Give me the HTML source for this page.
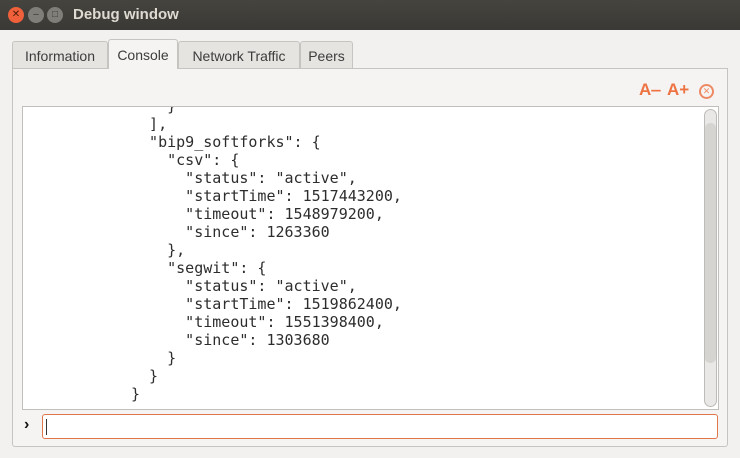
<!DOCTYPE html>
<html><head><style>
body{margin:0;width:740px;height:458px;background:#f2f1f0;font-family:"Liberation Sans",sans-serif;position:relative;overflow:hidden}
.title{position:absolute;left:0;top:0;width:740px;height:30px;background:linear-gradient(#45443f,#3a3935);}
.title span.t{position:absolute;left:73px;top:6px;color:#dfdbd2;font-weight:bold;font-size:15px}
.btn{position:absolute;top:7px;width:16px;height:16px;border-radius:50%;font-size:10px;text-align:center;line-height:16px}
.tab{position:absolute;top:41px;height:27px;border:1px solid #c6c4c0;border-bottom:none;border-radius:3px 3px 0 0;background:#e6e4e1;font-size:14px;color:#3c3c3c;line-height:28px;text-align:center;box-sizing:border-box}
.panel{position:absolute;left:12px;top:68px;width:716px;height:379px;border:1px solid #c6c4c0;border-radius:0 0 3px 3px;box-sizing:border-box;background:#f5f4f3}
.out{position:absolute;left:22px;top:106px;width:697px;height:304px;border:1px solid #c0bfbc;background:#fff;box-sizing:border-box;overflow:hidden}
pre{position:absolute;left:108px;top:-10px;margin:0;font-family:"DejaVu Sans Mono",monospace;font-size:15px;line-height:18px;color:#2d2d2d}
.input{position:absolute;left:42px;top:414px;width:676px;height:25px;border:1px solid #e0774a;border-radius:3px;background:#fff;box-sizing:border-box}
u{text-decoration:none;border-bottom:1px solid #333}
</style></head><body>
<div class="title">
<div class="btn" style="left:8px;background:#f0603a;color:#4a1a0a">✕</div>
<div class="btn" style="left:28px;background:#807e78;color:#3a3935">–</div>
<div class="btn" style="left:47px;background:#807e78;color:#3a3935">□</div>
<span class="t">Debug window</span></div>
<div class="panel"></div>
<div class="tab" style="left:12px;width:96px">Information</div>
<div class="tab" style="left:108px;width:70px;top:39px;height:30px;background:#f5f4f3;line-height:30px">Console</div>
<div class="tab" style="left:178px;width:122px">Network Traffic</div>
<div class="tab" style="left:300px;width:53px">Peers</div>
<div style="position:absolute;left:639px;top:80px;color:#ee7343;font-weight:bold;font-size:17px">A‒</div>
<div style="position:absolute;left:667px;top:80px;color:#ee7343;font-weight:bold;font-size:17px">A+</div>
<div style="position:absolute;left:699px;top:84px;width:11px;height:11px;border:2px solid #ee8a63;border-radius:50%;color:#ee8a63;font-size:9px;line-height:11px;text-align:center">✕</div>
<div class="out"><pre>    }
  ],
  "bip9_softforks": {
    "csv": {
      "status": "active",
      "startTime": 1517443200,
      "timeout": 1548979200,
      "since": 1263360
    },
    "segwit": {
      "status": "active",
      "startTime": 1519862400,
      "timeout": 1551398400,
      "since": 1303680
    }
  }
}</pre>
<div style="position:absolute;left:681px;top:2px;width:13px;height:298px;border:1px solid #bdbbb7;border-radius:7px;background:#e9e8e6;box-sizing:border-box"></div>
<div style="position:absolute;left:682px;top:16px;width:11px;height:240px;background:#d6d4d0;border-radius:5px"></div>
</div>
<div style="position:absolute;left:24px;top:416px;font-size:16px;font-weight:bold;color:#111">›</div>
<div class="input"><div style="position:absolute;left:3px;top:4px;width:1px;height:16px;background:#333"></div></div>
</body></html>
